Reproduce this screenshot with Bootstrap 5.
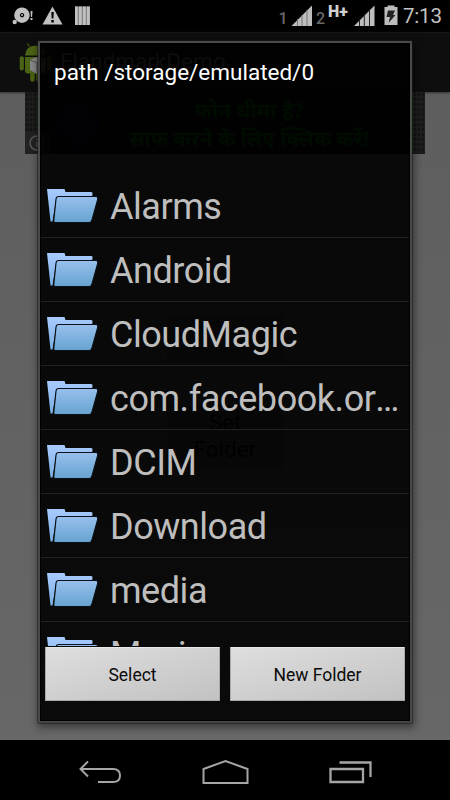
<!DOCTYPE html>
<html lang="en">
<head>
<meta charset="utf-8">
<meta name="viewport" content="width=device-width, initial-scale=1">
<title>Choose folder</title>
<link href="https://cdn.jsdelivr.net/npm/bootstrap@5.3.0/dist/css/bootstrap.min.css" rel="stylesheet">
<style>
  body { font-family: Roboto, "Noto Sans", sans-serif; background: #000; }
  .screen { width: 450px; height: 800px; background: #000; }
  .statusbar { height: 32px; }
  .clock { width: 40px; font-size: 20.5px; line-height: 33px; letter-spacing: -.2px; color: #c3c3c3; margin-right: 7px; }
  .statusbar svg, .softkeys svg, .folder-icon, .app-icon { display: block; flex: none; }
  .stage { background: linear-gradient(#5d5d5d, #676767); }
  .appbar { height: 60px; background: #0e0e0e; box-shadow: 0 1px 2px #333; border-top: 1px solid #171717; }
  .app-title { font-size: 22.5px; line-height: 26px; margin-top: -4px; color: #858585; }
  .ad { width: 400px; height: 62px; margin-left: 25px; color: #007c00; font: 700 20.8px/28px "Noto Sans", sans-serif;
        background: #080808; }
  .ad-edge { width: 13px; border-right: 1px solid #003c00;
        background: radial-gradient(circle, #141414 1.2px, #1e1e1e 1.8px) 0 0 / 4px 5px; }
  .ad-edge-end { border-right: 0; border-left: 1px solid #004500; }
  .ad-robot { left: 31px; top: 6px; }
  .ad-info { left: 0; bottom: 0; }
  .set-btn { left: 167px; width: 116px; background: #4c4c4c; color: #000; font-size: 22.5px; line-height: 27px; }
  .set-lower { top: 373px; height: 65px; }
  .set-upper { top: 283px; height: 48px; }
  .picker { left: 38px; top: 9px; width: 374px; height: 682px; border: 2px solid #494949; border-bottom-color: #444;
        outline: 1px solid rgba(25,25,25,.55); box-shadow: 1px 3px 7px 2px rgba(0,0,0,.4), inset 0 0 0 1px #000;
        background: linear-gradient(rgba(0,0,0,.91), rgba(0,0,0,.9)); border-radius: 1px; }
  .path-line { height: 131px; padding: 14px 14px; font-size: 22.5px; line-height: 30px; color: #fff; }
  .folders { height: 472px; margin: 0 1px; }
  .folder-row { height: 64px; flex: none; border-bottom: 1px solid #222; padding: 3px 6px 0 6px; gap: 11px; }
  .folder-icon { margin-top: -3px; }
  .folder-name { font-size: 36px; line-height: 60px; letter-spacing: -.45px; color: #bebebe; }
  .actions { padding: 1px 5px 0; gap: 10px; }
  .pick-btn { height: 54px; font-size: 17.5px; color: #0b0b0b; border: 1px solid #aaa; border-top-color: #e8e8e8; border-radius: 1px;
        background: linear-gradient(165deg, #dedede, #c2c2c2); padding: 2px 0 0; }
  .softkeys { height: 60px; padding: 3px 78px 0 79px; }
</style>
</head>
<body>
<svg width="0" height="0" class="position-absolute" aria-hidden="true">
  <defs>
    <linearGradient id="back" x2="0" y2="1"><stop stop-color="#a9cbff"/><stop offset="1" stop-color="#78aee0"/></linearGradient>
    <linearGradient id="front" x2="0" y2="1"><stop stop-color="#98c0ee"/><stop offset="1" stop-color="#66a3cf"/></linearGradient>
    <symbol id="folder" viewBox="0 0 52 36">
      <path d="M0 1h17.500l1 3H44q2 0 1.500 2l-.5 3H12Q9.500 9 9 12L5.500 33.500H3.500Z" fill="url(#back)"/>
      <path d="M11.500 8.500H49q2.200 0 1.700 3L45 32q-.7 2.500-2.500 2.500H8q-1.500 0-1.200-2.500L9 11q.4-2.500 2.500-2.500Z" fill="url(#front)" stroke="#0b1119" stroke-width="1.200"/>
    </symbol>
    <symbol id="droid" viewBox="0 0 44 52">
      <path d="M14 4 11 0M30 4l3-4" stroke="currentColor" stroke-width="1.500"/>
      <path d="M8 16Q9 3 22 3T36 16ZM8 18H36V36q0 4-4 4H29v8q0 3-3 3t-3-3V40H21v8q0 3-3 3t-3-3V40H12q-4 0-4-4Z" fill="currentColor"/>
      <rect x="1" y="17" width="5.500" height="19" rx="2.700" fill="currentColor"/>
      <rect x="37.500" y="17" width="5.500" height="19" rx="2.700" fill="currentColor"/>
    </symbol>
  </defs>
</svg>
<div class="screen d-flex flex-column overflow-hidden">
  <header class="statusbar d-flex justify-content-between">
    <svg width="100" height="32" viewBox="0 0 100 32" fill="#c1c1c1">
      <path fill-rule="evenodd" d="M22 7.500a7.700 7.700 0 1 1-.1 0ZM22 13a2.200 2.200 0 1 0 .1 0Z"/>
      <circle cx="22" cy="15" r="1"/><circle cx="14.700" cy="22" r="2.200"/>
      <path d="M30.500 11h2l-.4 6h-1.200ZM30.500 18h2v2h-2Z"/>
      <path d="M52.500 6.500 62.500 24.500H42.500Z"/><path d="M51.300 12h2.500l-.4 6.500h-1.700ZM51.300 20h2.500v2.500h-2.500Z" fill="#000"/>
      <path d="M75 6.500h15v18.500H75Z" fill="#858585"/><path d="M75 6.500h2.700v18.500H75ZM79 6.500h2.700v18.500H79ZM83 6.500h2.700v18.500H83ZM87 6.500h2.700v18.500H87Z"/>
    </svg>
    <div class="d-flex">
      <svg width="128" height="32" viewBox="275 0 128 32" fill="#bdbdbd" font-family="Roboto, sans-serif">
        <text x="278.500" y="23.500" font-size="16" font-weight="500" fill="#686868">1</text>
        <path d="M291.500 26 312 5.500V26Z"/><path d="M297.500 19v7M302 15v11M307 10v16" stroke="#777" stroke-width="1"/>
        <text x="316" y="23.500" font-size="16" font-weight="500" fill="#686868">2</text>
        <text x="328" y="17" font-size="16" font-weight="900" fill="#d0d0d0">H+</text>
        <path d="M354 26 374.500 5.500V26Z"/><path d="M359.500 19v7M364.300 14v12M369.500 9v17" stroke="#222" stroke-width="1"/>
        <path d="M387.500 5.500h7V7h3v18h-13V7h3Z"/><path d="M388 10.500h7l-2 4.500h2.500l-7 8 1.500-6h-3.500Z" fill="#222"/>
      </svg>
      <span class="clock ps-0">7:13</span>
    </div>
  </header>

  <main class="stage position-relative flex-grow-1">
    <div class="appbar d-flex align-items-center ps-3">
      <svg class="app-icon" width="40" height="40" viewBox="0 0 40 40">
        <use href="#droid" x="3" y="0" width="33" height="40" color="#4c6415"/>
        <path d="m14 17 7-3 8 3v10l-8 4-7-4Z" fill="#888"/><path d="m14 17 7 3v11M21 20l8-3" fill="none" stroke="#555"/>
      </svg>
      <span class="app-title ms-1">FlandmarkDemo</span>
    </div>
    <section class="ad d-flex position-relative">
      <div class="ad-edge"></div>
      <div class="flex-grow-1 text-center ps-5 pt-1 text-nowrap">फोन धीमा है?<br>साफ करने के लिए क्लिक करें!</div>
      <div class="ad-edge ad-edge-end"></div>
      <svg class="ad-robot position-absolute" width="44" height="52" color="#10103a"><use href="#droid"/></svg>
      <svg class="ad-info position-absolute" width="25" height="22" viewBox="0 0 25 22" fill="none" stroke="#575757" stroke-width="1.500"><path d="M0 0h25v22H0Z" fill="#222" stroke="none"/><circle cx="12" cy="11" r="7"/><path d="M12 10v5M12 6.500v1.500"/></svg>
    </section>
    <div class="set-btn set-upper position-absolute"></div>
    <div class="set-btn set-lower position-absolute text-center pt-1">Set<br>Folder</div>

    <section class="picker position-absolute d-flex flex-column" role="dialog">
      <div class="path-line flex-shrink-0">path /storage/emulated/0</div>
      <div class="folders d-flex flex-column overflow-hidden flex-shrink-0">
        <div class="folder-row d-flex align-items-center"><svg class="folder-icon" width="52" height="36"><use href="#folder"/></svg><span class="folder-name text-truncate">Alarms</span></div>
        <div class="folder-row d-flex align-items-center"><svg class="folder-icon" width="52" height="36"><use href="#folder"/></svg><span class="folder-name text-truncate">Android</span></div>
        <div class="folder-row d-flex align-items-center"><svg class="folder-icon" width="52" height="36"><use href="#folder"/></svg><span class="folder-name text-truncate">CloudMagic</span></div>
        <div class="folder-row d-flex align-items-center"><svg class="folder-icon" width="52" height="36"><use href="#folder"/></svg><span class="folder-name text-truncate">com.facebook.orca</span></div>
        <div class="folder-row d-flex align-items-center"><svg class="folder-icon" width="52" height="36"><use href="#folder"/></svg><span class="folder-name text-truncate">DCIM</span></div>
        <div class="folder-row d-flex align-items-center"><svg class="folder-icon" width="52" height="36"><use href="#folder"/></svg><span class="folder-name text-truncate">Download</span></div>
        <div class="folder-row d-flex align-items-center"><svg class="folder-icon" width="52" height="36"><use href="#folder"/></svg><span class="folder-name text-truncate">media</span></div>
        <div class="folder-row d-flex align-items-center"><svg class="folder-icon" width="52" height="36"><use href="#folder"/></svg><span class="folder-name text-truncate">Movies</span></div>
      </div>
      <div class="actions d-flex">
        <button type="button" class="pick-btn btn w-50">Select</button>
        <button type="button" class="pick-btn btn w-50">New Folder</button>
      </div>
    </section>
  </main>

  <footer class="softkeys d-flex justify-content-between align-items-center">
    <svg width="43" height="24" viewBox="0 0 43 24" fill="none" stroke="#a5a5a5" stroke-width="2"><path d="M9 1.500 1.500 9 9 16.500M2 9H34q7 0 7 6.500t-7 6.500H19"/></svg>
    <svg width="47" height="26" viewBox="0 0 47 26" fill="none" stroke="#a5a5a5" stroke-width="2"><path d="M1.500 24V10L23.500 2 45.500 10V24Z"/></svg>
    <svg width="43" height="24" viewBox="0 0 43 24" fill="none" stroke="#a5a5a5" stroke-width="2.300"><path d="M1.500 9H34V22H1.500ZM10.500 2.500H41.500V17"/></svg>
  </footer>
</div>
<script src="https://cdn.jsdelivr.net/npm/bootstrap@5.3.0/dist/js/bootstrap.bundle.min.js"></script>
</body>
</html>
